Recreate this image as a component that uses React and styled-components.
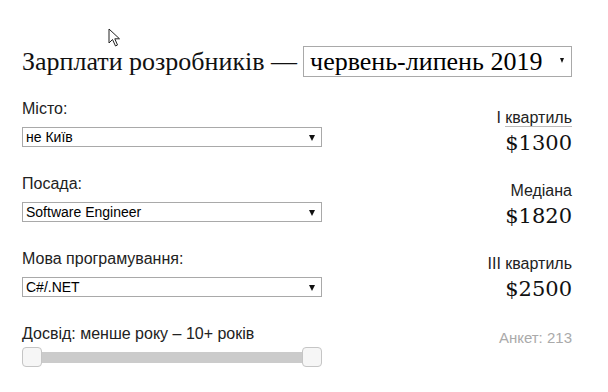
import React, { useState } from 'react';
import styled, { createGlobalStyle } from 'styled-components';

const GlobalStyle = createGlobalStyle`
  body {
    margin: 0;
    background: #fff;
    font-family: "Liberation Sans", Arial, sans-serif;
    color: #222;
  }
`;

const fields = [
  { label: 'Місто:', value: 'не Київ' },
  { label: 'Посада:', value: 'Software Engineer' },
  { label: 'Мова програмування:', value: 'C#/.NET' },
];

const stats = [
  { label: 'І квартиль', value: '$1300', hint: true },
  { label: 'Медіана', value: '$1820' },
  { label: 'ІІІ квартиль', value: '$2500' },
];

const Page = styled.div`
  position: relative;
  width: 608px;
  height: 392px;
  box-sizing: border-box;
  padding: 46px 36px 0 22px;
`;

const Header = styled.div`
  display: flex;
  align-items: center;
  gap: 6px;
  margin-bottom: 23px;
  white-space: nowrap;
`;

const Title = styled.h1`
  margin: 0;
  font-family: "Liberation Serif", serif;
  font-weight: normal;
  font-size: 26px;
  color: #111;
`;

const SelectWrap = styled.div`
  position: relative;
  display: flex;
  width: ${p => p.$width}px;
`;

const Select = styled.select`
  appearance: none;
  width: 100%;
  height: ${p => (p.$big ? 31 : 20)}px;
  box-sizing: border-box;
  margin: 0;
  border: 1px solid #a9a9a9;
  border-radius: 0;
  background: #fff;
  color: #000;
  padding: ${p => (p.$big ? '0 0 0 6px' : '0 0 0 3px')};
  font-family: ${p => (p.$big ? '"Liberation Serif", serif' : '"Liberation Sans", Arial, sans-serif')};
  font-size: ${p => (p.$big ? 26 : 14)}px;
  outline: none;
`;

const Arrow = styled.span`
  position: absolute;
  right: ${p => (p.$big ? 8 : 7)}px;
  top: 50%;
  width: 0;
  height: 0;
  margin-top: ${p => (p.$big ? -4 : -2)}px;
  border-left: ${p => (p.$big ? 2.5 : 3.5)}px solid transparent;
  border-right: ${p => (p.$big ? 2.5 : 3.5)}px solid transparent;
  border-top: ${p => (p.$big ? 5 : 6)}px solid #111;
  pointer-events: none;
`;

const Main = styled.div`
  display: flex;
  justify-content: space-between;
`;

const Filters = styled.div`
  display: flex;
  flex-direction: column;
  gap: 28px;
  width: 300px;
`;

const Field = styled.div`
  display: flex;
  flex-direction: column;
  gap: ${p => p.$gap}px;
`;

const Label = styled.label`
  font-size: 16px;
  line-height: 18px;
  color: #222;
`;

const Slider = styled.div`
  display: flex;
  align-items: center;
  height: 20px;
`;

const Handle = styled.div`
  width: 20px;
  height: 20px;
  box-sizing: border-box;
  flex-shrink: 0;
  background: #f6f6f6;
  border: 1px solid #c5c5c5;
  border-radius: 4px;
  position: relative;
  z-index: 1;
`;

const Bar = styled.div`
  flex: 1;
  height: 11px;
  background: #cbcbcb;
  margin: 0 -1px;
`;

const Results = styled.div`
  display: flex;
  flex-direction: column;
  align-items: flex-end;
  padding-top: 9px;
  gap: 26px;
`;

const Stat = styled.div`
  display: flex;
  flex-direction: column;
  align-items: flex-end;
  gap: 3px;
`;

const StatLabel = styled.span`
  font-size: 16px;
  line-height: 18px;
  color: #222;
`;

const HintWord = styled.span`
  border-bottom: 1px solid #bbb;
`;

const StatValue = styled.span`
  font-family: "DejaVu Serif", "Liberation Serif", serif;
  font-size: 21px;
  line-height: 26px;
  color: #111;
`;

const Count = styled.span`
  margin-top: 1px;
  font-size: 15px;
  line-height: 17px;
  color: #aaa;
`;

const Cursor = styled.svg`
  position: absolute;
  left: 108px;
  top: 28px;
`;

const renderLabel = (label, hint) => {
  if (!hint) return label;
  const [first, ...rest] = label.split(' ');
  return (
    <>
      {first} <HintWord>{rest.join(' ')}</HintWord>
    </>
  );
};

const App = () => {
  const [period, setPeriod] = useState('червень-липень 2019');

  return (
    <Page>
      <GlobalStyle />
      <Cursor width="14" height="20" viewBox="0 0 14 20">
        <path d="M1 1 L1 15 L4.5 11.5 L7.5 18 L9.5 17 L6.8 10.8 L11.5 10.8 Z" fill="#fff" stroke="#222" strokeWidth="1" strokeLinejoin="round" />
      </Cursor>
      <Header>
        <Title>Зарплати розробників —</Title>
        <SelectWrap $width={270}>
          <Select $big value={period} onChange={e => setPeriod(e.target.value)}>
            <option>червень-липень 2019</option>
            <option>грудень 2018</option>
          </Select>
          <Arrow $big />
        </SelectWrap>
      </Header>
      <Main>
        <Filters>
          {fields.map(f => (
            <Field key={f.label} $gap={9}>
              <Label>{f.label}</Label>
              <SelectWrap $width={300}>
                <Select defaultValue={f.value}>
                  <option>{f.value}</option>
                </Select>
                <Arrow />
              </SelectWrap>
            </Field>
          ))}
          <Field $gap={4}>
            <Label>Досвід: менше року – 10+ років</Label>
            <Slider>
              <Handle />
              <Bar />
              <Handle />
            </Slider>
          </Field>
        </Filters>
        <Results>
          {stats.map(s => (
            <Stat key={s.label}>
              <StatLabel>{renderLabel(s.label, s.hint)}</StatLabel>
              <StatValue>{s.value}</StatValue>
            </Stat>
          ))}
          <Count>Анкет: 213</Count>
        </Results>
      </Main>
    </Page>
  );
};

export default App;
